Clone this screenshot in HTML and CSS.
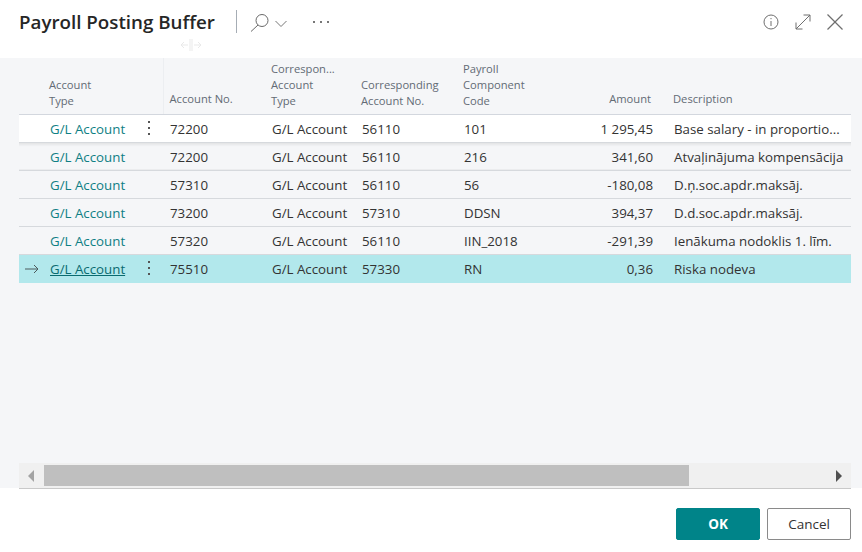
FILE: index.html
```html
<!DOCTYPE html>
<html lang="en">
<head>
    <meta charset="UTF-8">
    <meta name="viewport" content="width=device-width, initial-scale=1.0">
    <title>Payroll Posting Buffer</title>
    <link rel="stylesheet" href="styles.css">
</head>
<body>
    <div class="dialog">
        <header class="top-bar">
            <h1>Payroll Posting Buffer</h1>
            <span class="divider"></span>
            <svg class="icon search" width="38" height="20" viewBox="0 0 38 20" fill="none" stroke="#6a6a6a" stroke-width="1">
                <circle cx="12" cy="8.5" r="6"/>
                <path d="M8 13 L1 19.5"/>
                <path d="M25.5 9 L31 14.5 L36.5 9" stroke="#777"/>
            </svg>
            <span class="more">
                <i></i><i></i><i></i>
            </span>
            <div class="top-actions">
                <svg width="16" height="16" viewBox="0 0 16 16" fill="none" stroke="#6f6f6f">
                    <circle cx="8" cy="8" r="7"/>
                    <path d="M8 7 V12"/>
                    <path d="M8 4 V5.2"/>
                </svg>
                <svg width="16" height="16" viewBox="0 0 16 16" fill="none" stroke="#6f6f6f">
                    <path d="M1 15 L15 1"/>
                    <path d="M8.5 1 H15 V7.5"/>
                    <path d="M1 8.5 V15 H7.5"/>
                </svg>
                <svg width="16" height="16" viewBox="0 0 16 16" fill="none" stroke="#6f6f6f" stroke-width="1.3">
                    <path d="M0.5 0.5 L15.5 15.5"/>
                    <path d="M15.5 0.5 L0.5 15.5"/>
                </svg>
            </div>
            <svg class="resize-hint" width="22" height="12" viewBox="0 0 22 12" fill="none" stroke="#e9e9e9">
                <path d="M10 0 V12 M12 0 V12"/>
                <path d="M8 6 H1 M4 3 L1 6 L4 9"/>
                <path d="M14 6 H21 M18 3 L21 6 L18 9"/>
            </svg>
        </header>

        <main class="content">
            <div class="table-wrap">
                <table class="grid">
                    <colgroup>
                        <col class="c-marker">
                        <col class="c-type">
                        <col class="c-no">
                        <col class="c-ctype">
                        <col class="c-cno">
                        <col class="c-code">
                        <col class="c-amount">
                        <col class="c-desc">
                    </colgroup>
                    <thead>
                        <tr>
                            <th></th>
                            <th class="first">Account<br>Type</th>
                            <th class="single">Account No.</th>
                            <th>Correspon...<br>Account<br>Type</th>
                            <th>Corresponding<br>Account No.</th>
                            <th>Payroll<br>Component<br>Code</th>
                            <th class="num single">Amount</th>
                            <th class="single desc">Description</th>
                        </tr>
                    </thead>
                    <tbody>
                        <tr class="raised">
                            <td></td>
                            <td class="first"><a href="#">G/L Account</a><span class="dots"><i></i><i></i><i></i></span></td>
                            <td>72200</td>
                            <td>G/L Account</td>
                            <td>56110</td>
                            <td>101</td>
                            <td class="num">1 295,45</td>
                            <td class="desc">Base salary - in proportio...</td>
                        </tr>
                        <tr>
                            <td></td>
                            <td class="first"><a href="#">G/L Account</a></td>
                            <td>72200</td>
                            <td>G/L Account</td>
                            <td>56110</td>
                            <td>216</td>
                            <td class="num">341,60</td>
                            <td class="desc">Atvaļinājuma kompensācija</td>
                        </tr>
                        <tr>
                            <td></td>
                            <td class="first"><a href="#">G/L Account</a></td>
                            <td>57310</td>
                            <td>G/L Account</td>
                            <td>56110</td>
                            <td>56</td>
                            <td class="num">-180,08</td>
                            <td class="desc">D.ņ.soc.apdr.maksāj.</td>
                        </tr>
                        <tr>
                            <td></td>
                            <td class="first"><a href="#">G/L Account</a></td>
                            <td>73200</td>
                            <td>G/L Account</td>
                            <td>57310</td>
                            <td>DDSN</td>
                            <td class="num">394,37</td>
                            <td class="desc">D.d.soc.apdr.maksāj.</td>
                        </tr>
                        <tr>
                            <td></td>
                            <td class="first"><a href="#">G/L Account</a></td>
                            <td>57320</td>
                            <td>G/L Account</td>
                            <td>56110</td>
                            <td>IIN_2018</td>
                            <td class="num">-291,39</td>
                            <td class="desc">Ienākuma nodoklis 1. līm.</td>
                        </tr>
                        <tr class="selected">
                            <td class="marker">
                                <svg width="16" height="10" viewBox="0 0 16 10" fill="none" stroke="#4c5a5c">
                                    <path d="M1 5 H14"/>
                                    <path d="M10 1 L14 5 L10 9"/>
                                </svg>
                            </td>
                            <td class="first"><a href="#" class="current">G/L Account</a><span class="dots"><i></i><i></i><i></i></span></td>
                            <td>75510</td>
                            <td>G/L Account</td>
                            <td>57330</td>
                            <td>RN</td>
                            <td class="num">0,36</td>
                            <td class="desc">Riska nodeva</td>
                        </tr>
                    </tbody>
                </table>
            </div>

            <div class="scrollbar">
                <span class="arrow left"></span>
                <span class="track"><span class="thumb"></span></span>
                <span class="arrow right"></span>
            </div>
        </main>

        <footer class="bottom-bar">
            <button class="btn primary">OK</button>
            <button class="btn">Cancel</button>
        </footer>
    </div>
</body>
</html>
```

FILE: styles.css
```css
* {
    box-sizing: border-box;
}
body {
    margin: 0;
    font-family: "Open Sans", "Noto Sans", Arial, sans-serif;
    background-color: #fff;
    color: #333;
}
.dialog {
    display: flex;
    flex-direction: column;
    height: 552px;
    overflow: hidden;
}

/* top bar */
.top-bar {
    position: relative;
    display: flex;
    align-items: center;
    height: 58px;
    padding: 0 19px 15px;
    flex-shrink: 0;
}
.top-bar h1 {
    margin: 0;
    font-size: 18.75px;
    font-weight: 600;
    color: #262626;
}
.divider {
    width: 1px;
    height: 23px;
    margin-left: 21px;
    background-color: #a6adb5;
}
.search {
    margin-left: 13px;
}
.more {
    display: flex;
    gap: 5px;
    margin-left: 25px;
}
.more i {
    width: 2px;
    height: 2px;
    background-color: #777;
}
.top-actions {
    display: flex;
    align-items: center;
    gap: 16px;
    margin-left: auto;
}
.resize-hint {
    position: absolute;
    left: 180px;
    top: 39px;
}

/* grid */
.content {
    flex: 1;
    display: flex;
    flex-direction: column;
    background-color: #f5f6f8;
    padding: 0 11px 0 19px;
}
.table-wrap {
    flex: 1;
}
.grid {
    width: 832px;
    table-layout: fixed;
    border-collapse: collapse;
    font-size: 13.3px;
}
.c-marker { width: 30px; }
.c-type { width: 114px; }
.c-no { width: 102px; }
.c-ctype { width: 90px; }
.c-cno { width: 102px; }
.c-code { width: 100px; }
.c-amount { width: 100px; }
.c-desc { width: 194px; }

.grid th {
    height: 56px;
    padding: 0 6px 5px;
    vertical-align: bottom;
    text-align: left;
    font-size: 11.2px;
    font-weight: 400;
    line-height: 16px;
    color: #636b75;
    border-bottom: 1px solid #d3d7de;
    white-space: nowrap;
}
.grid th.single {
    padding-bottom: 7px;
}
.grid th:nth-child(2) {
    border-right: 1px solid #eceef1;
}
.grid th.first {
    padding-left: 0;
}
.grid td {
    height: 28px;
    padding: 2px 6px 0 7px;
    color: #333;
    border-bottom: 1px solid #d6d9dd;
    white-space: nowrap;
}
.grid td.first {
    position: relative;
    padding-left: 1px;
}
.grid a {
    color: #0f7f84;
    text-decoration: none;
}
.grid a.current {
    color: #0a6b70;
    text-decoration: underline;
}
.grid .num {
    text-align: right;
}
.grid td.num {
    padding-right: 4px;
}
.grid th.desc {
    padding-left: 16px;
}
.grid td.desc {
    padding-left: 17px;
}
.raised td {
    background-color: #fff;
}
.raised + tr td {
    background-image: linear-gradient(rgba(0, 0, 0, 0.09), rgba(0, 0, 0, 0) 4px);
}
.selected td {
    height: 29px;
    padding-bottom: 1px;
    background-color: #b2e8ec;
    border-bottom: none;
}
.marker svg {
    display: block;
    margin-left: -2px;
}
.dots {
    position: absolute;
    left: 99px;
    top: 6px;
    display: flex;
    flex-direction: column;
    gap: 4px;
}
.dots i {
    width: 2px;
    height: 2px;
    background-color: #555;
}

/* scrollbar */
.scrollbar {
    display: flex;
    align-items: center;
    height: 25px;
    flex-shrink: 0;
    background-color: #f0f0f0;
}
.arrow {
    width: 0;
    height: 0;
    border-top: 6px solid transparent;
    border-bottom: 6px solid transparent;
}
.arrow.left {
    margin: 0 10px 0 9px;
    border-right: 6px solid #a3a3a3;
}
.arrow.right {
    margin: 0 9px 0 10px;
    border-left: 6px solid #505050;
}
.track {
    flex: 1;
    height: 21px;
}
.thumb {
    display: block;
    width: 645px;
    height: 21px;
    background-color: #bfbfbf;
}

/* footer */
.bottom-bar {
    position: relative;
    display: flex;
    justify-content: flex-end;
    gap: 7px;
    height: 64px;
    flex-shrink: 0;
    padding: 20px 11px 0 0;
    background-color: #fff;
}
.bottom-bar::before {
    content: "";
    position: absolute;
    left: 19px;
    right: 11px;
    top: 0;
    height: 1px;
    background-color: #c9c9c9;
}
.btn {
    width: 84px;
    height: 32px;
    font-family: inherit;
    font-size: 13.5px;
    color: #333;
    background-color: #fff;
    border: 1px solid #8a8a8a;
    border-radius: 2px;
    cursor: pointer;
}
.btn.primary {
    color: #fff;
    font-weight: 700;
    background-color: #008489;
    border-color: #008489;
}
```
